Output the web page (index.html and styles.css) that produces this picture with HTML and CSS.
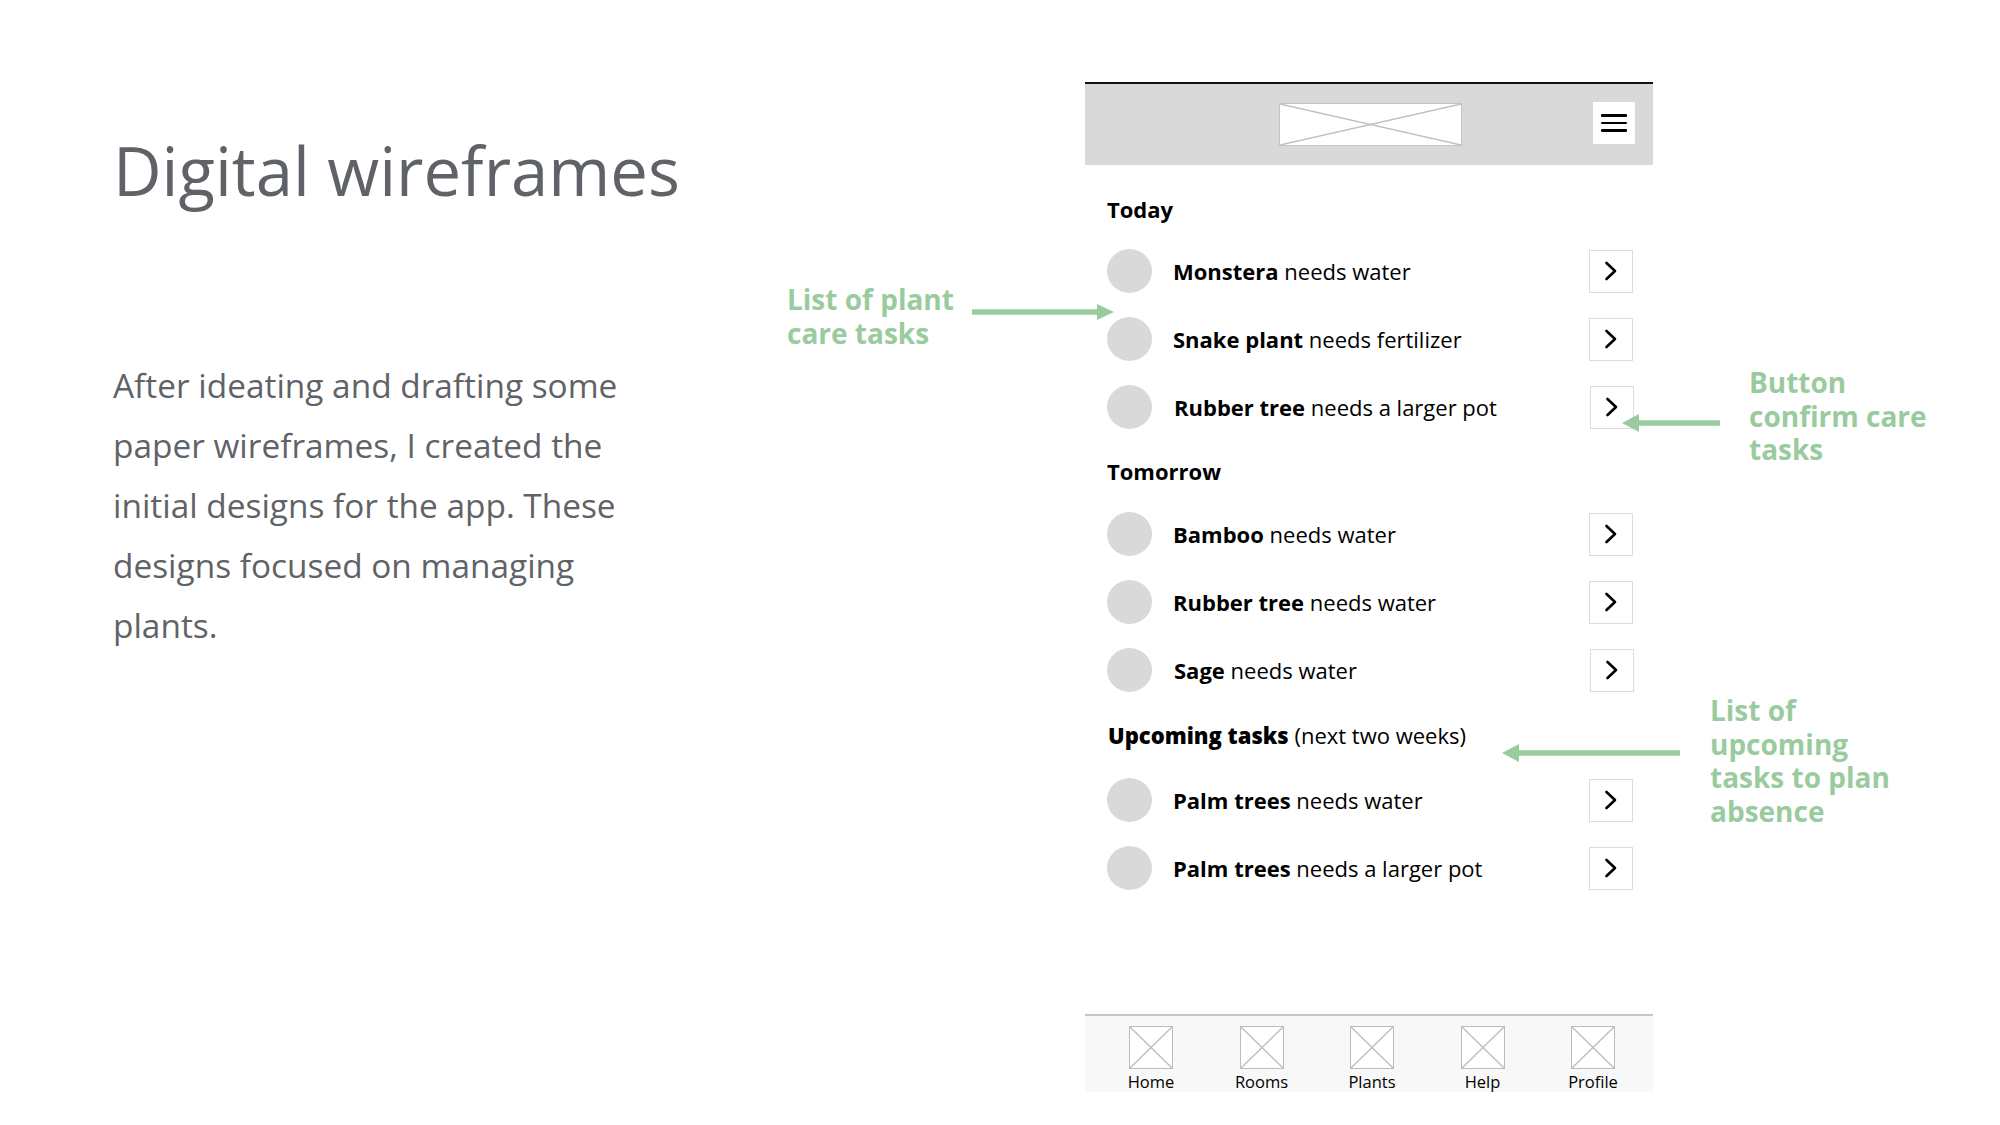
FILE: index.html
```html
<!DOCTYPE html>
<html lang="en">
<head>
<meta charset="utf-8">
<title>Digital wireframes</title>
<link rel="stylesheet" href="styles.css">
</head>
<body>
<div class="slide">
  <section class="intro">
    <h1 class="title">Digital wireframes</h1>
    <p class="lead">After ideating and drafting some paper wireframes, I created the initial designs for the app. These designs focused on managing plants.</p>
  </section>

  <section class="phone">
    <header class="app-header">
      <div class="logo-ph">
        <svg viewBox="0 0 183 43" preserveAspectRatio="none"><line x1="0" y1="0" x2="183" y2="43"/><line x1="0" y1="43" x2="183" y2="0"/></svg>
      </div>
      <div class="menu-btn">
        <span></span><span></span><span></span>
      </div>
    </header>

    <div class="app-body">
      <div class="group">
        <div class="group-label label-today">Today</div>
        <div class="task"><span class="dot"></span><span class="task-text"><b>Monstera</b> needs water</span><span class="go"><svg viewBox="0 0 14 20"><polyline points="2.5,2 11,10 2.5,18"/></svg></span></div>
        <div class="task"><span class="dot"></span><span class="task-text"><b>Snake plant</b> needs fertilizer</span><span class="go"><svg viewBox="0 0 14 20"><polyline points="2.5,2 11,10 2.5,18"/></svg></span></div>
        <div class="task task-shift"><span class="dot"></span><span class="task-text"><b>Rubber tree</b> needs a larger pot</span><span class="go"><svg viewBox="0 0 14 20"><polyline points="2.5,2 11,10 2.5,18"/></svg></span></div>
      </div>
      <div class="group">
        <div class="group-label label-tomorrow">Tomorrow</div>
        <div class="task"><span class="dot"></span><span class="task-text"><b>Bamboo</b> needs water</span><span class="go"><svg viewBox="0 0 14 20"><polyline points="2.5,2 11,10 2.5,18"/></svg></span></div>
        <div class="task"><span class="dot"></span><span class="task-text"><b>Rubber tree</b> needs water</span><span class="go"><svg viewBox="0 0 14 20"><polyline points="2.5,2 11,10 2.5,18"/></svg></span></div>
        <div class="task task-shift"><span class="dot"></span><span class="task-text"><b>Sage</b> needs water</span><span class="go"><svg viewBox="0 0 14 20"><polyline points="2.5,2 11,10 2.5,18"/></svg></span></div>
      </div>
      <div class="group group-upcoming">
        <div class="group-label label-upcoming"><b>Upcoming tasks</b> <span class="light">(next two weeks)</span></div>
        <div class="task"><span class="dot"></span><span class="task-text"><b>Palm trees</b> needs water</span><span class="go"><svg viewBox="0 0 14 20"><polyline points="2.5,2 11,10 2.5,18"/></svg></span></div>
        <div class="task"><span class="dot"></span><span class="task-text"><b>Palm trees</b> needs a larger pot</span><span class="go"><svg viewBox="0 0 14 20"><polyline points="2.5,2 11,10 2.5,18"/></svg></span></div>
      </div>
    </div>

    <nav class="tabbar">
      <div class="tab"><span class="tab-icon"><svg viewBox="0 0 43 42" preserveAspectRatio="none"><line x1="0" y1="0" x2="43" y2="42"/><line x1="0" y1="42" x2="43" y2="0"/></svg></span><span class="tab-label">Home</span></div>
      <div class="tab"><span class="tab-icon"><svg viewBox="0 0 43 42" preserveAspectRatio="none"><line x1="0" y1="0" x2="43" y2="42"/><line x1="0" y1="42" x2="43" y2="0"/></svg></span><span class="tab-label">Rooms</span></div>
      <div class="tab"><span class="tab-icon"><svg viewBox="0 0 43 42" preserveAspectRatio="none"><line x1="0" y1="0" x2="43" y2="42"/><line x1="0" y1="42" x2="43" y2="0"/></svg></span><span class="tab-label">Plants</span></div>
      <div class="tab"><span class="tab-icon"><svg viewBox="0 0 43 42" preserveAspectRatio="none"><line x1="0" y1="0" x2="43" y2="42"/><line x1="0" y1="42" x2="43" y2="0"/></svg></span><span class="tab-label">Help</span></div>
      <div class="tab"><span class="tab-icon"><svg viewBox="0 0 43 42" preserveAspectRatio="none"><line x1="0" y1="0" x2="43" y2="42"/><line x1="0" y1="42" x2="43" y2="0"/></svg></span><span class="tab-label">Profile</span></div>
    </nav>
  </section>

  <div class="note note-list">List of plant<br>care tasks</div>
  <svg class="arrow arrow-list" viewBox="0 0 142 18"><line x1="0" y1="9" x2="126" y2="9"/><polygon points="125,1 142,9 125,17"/></svg>

  <div class="note note-button">Button<br>confirm care<br>tasks</div>
  <svg class="arrow arrow-button" viewBox="0 0 98 18"><line x1="16" y1="9" x2="98" y2="9"/><polygon points="17,0 0,9 17,18"/></svg>

  <div class="note note-upcoming">List of<br>upcoming<br>tasks to plan<br>absence</div>
  <svg class="arrow arrow-upcoming" viewBox="0 0 178 18"><line x1="16" y1="9" x2="178" y2="9"/><polygon points="17,0 0,9 17,18"/></svg>
</div>
</body>
</html>
```

FILE: styles.css
```css
* { box-sizing: border-box; }

html, body {
  margin: 0;
  padding: 0;
  background: #ffffff;
}

body {
  font-family: "Open Sans", "Noto Sans", "Liberation Sans", sans-serif;
}

.slide {
  position: relative;
  width: 2000px;
  height: 1125px;
  display: flex;
  align-items: flex-start;
  overflow: hidden;
}

/* Left column */
.intro {
  width: 1085px;
  flex: none;
  padding-left: 113px;
  padding-top: 124px;
}

.title {
  margin: 0;
  font-weight: 400;
  font-size: 67px;
  line-height: normal;
  color: #5f6368;
}

.lead {
  margin: 139px 0 0 0;
  width: 545px;
  font-size: 33.4px;
  line-height: 60px;
  color: #5f6368;
}

/* Phone wireframe */
.phone {
  flex: none;
  width: 568px;
  height: 1010px;
  margin-top: 82px;
  display: flex;
  flex-direction: column;
  background: #ffffff;
}

.app-header {
  height: 83px;
  border-top: 2px solid #111111;
  background: #d9d9d9;
  display: flex;
  align-items: center;
  justify-content: center;
  position: relative;
}

.logo-ph {
  width: 183px;
  height: 43px;
  background: #ffffff;
  border: 1.5px solid #c4c4c4;
  margin-left: 2px;
}

.logo-ph svg,
.tab-icon svg {
  display: block;
  width: 100%;
  height: 100%;
}

.logo-ph line,
.tab-icon line {
  stroke: #c0c0c0;
  stroke-width: 1.5;
}

.menu-btn {
  position: absolute;
  right: 18px;
  top: 18px;
  width: 42px;
  height: 42px;
  background: #ffffff;
  display: flex;
  flex-direction: column;
  justify-content: center;
  align-items: center;
  gap: 5px;
}

.menu-btn span {
  display: block;
  width: 26px;
  height: 2.5px;
  background: #000000;
  border-radius: 1px;
}

.app-body {
  padding: 29px 20px 0 22px;
  display: flex;
  flex-direction: column;
  gap: 15px;
}

.group {
  display: flex;
  flex-direction: column;
}

.group-upcoming {
  margin-top: 1px;
}

.group-label {
  height: 30px;
  line-height: 30px;
  font-size: 22px;
  font-weight: 700;
  color: #000000;
}

.label-today { margin-bottom: 13px; }
.label-tomorrow { margin-bottom: 14px; }
.label-upcoming {
  margin-bottom: 16px;
  padding-left: 1px;
}

.group-label .light {
  font-weight: 400;
}

.task {
  height: 68px;
  flex: none;
  display: flex;
  align-items: center;
}

.task-shift .task-text {
  margin-left: 22px;
}

.task-shift .go {
  margin-right: -1px;
}

.dot {
  width: 45px;
  height: 44px;
  border-radius: 50%;
  background: #d9d9d9;
  flex: none;
}

.task-text {
  margin-left: 21px;
  flex: 1;
  font-size: 22px;
  color: #000000;
}

.task-text b {
  font-weight: 700;
}

.go {
  width: 44px;
  height: 43px;
  border: 1.5px solid #dcdcdc;
  background: #ffffff;
  display: flex;
  align-items: center;
  justify-content: center;
  flex: none;
}

.go svg {
  width: 14px;
  height: 20px;
}

.go polyline {
  fill: none;
  stroke: #000000;
  stroke-width: 2.6;
  stroke-linecap: round;
  stroke-linejoin: round;
}

/* Bottom tab bar */
.tabbar {
  margin-top: auto;
  height: 78px;
  border-top: 2px solid #c6c6c6;
  background: #f8f8f8;
  display: flex;
  justify-content: center;
  padding-top: 10px;
  padding-left: 6px;
}

.tab {
  width: 110.5px;
  display: flex;
  flex-direction: column;
  align-items: center;
}

.tab-icon {
  width: 44px;
  height: 43px;
  border: 1.5px solid #bcbcbc;
  background: #ffffff;
  display: block;
}

.tab-label {
  margin-top: 3px;
  font-size: 16.5px;
  line-height: 20px;
  color: #000000;
}

/* Annotations */
.note {
  position: absolute;
  font-size: 28px;
  line-height: 33.5px;
  font-weight: 700;
  color: #9acb9e;
}

.note-list { left: 787px; top: 283px; }
.note-button { left: 1749px; top: 366px; }
.note-upcoming { left: 1710px; top: 694px; }

.arrow {
  position: absolute;
  height: 18px;
}

.arrow line {
  stroke: #9acb9e;
  stroke-width: 5.5;
}

.arrow polygon {
  fill: #9acb9e;
}

.arrow-list { left: 972px; top: 303px; width: 142px; }
.arrow-button { left: 1622px; top: 414px; width: 98px; }
.arrow-upcoming { left: 1502px; top: 744px; width: 178px; }
```
